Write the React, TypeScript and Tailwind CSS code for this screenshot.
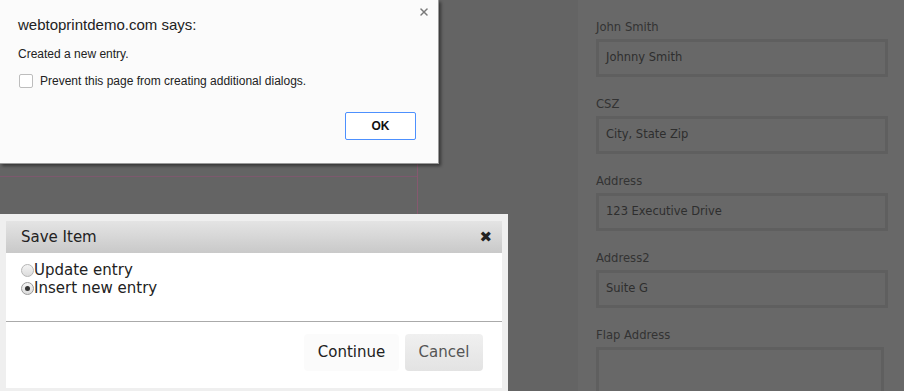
import { X } from "lucide-react";

const fields = [
  { label: "John Smith", value: "Johnny Smith" },
  { label: "CSZ", value: "City, State Zip" },
  { label: "Address", value: "123 Executive Drive" },
  { label: "Address2", value: "Suite G" },
];

const App = () => {
  return (
    <div className="relative w-[904px] h-[391px] overflow-hidden bg-[#646464] font-['DejaVu_Sans',sans-serif]">
      {/* page behind the overlay */}
      <div className="flex h-full">
        <div className="w-[578px] h-full flex items-start">
          <div className="w-[417px] h-[177px] border-b border-[#7d586e]" />
          <div className="w-px h-[260px] bg-[#86596f]" />
        </div>
        <div className="flex-1 h-full bg-[#686868] pl-[18px] pr-[16px] pt-[19px]">
          {fields.map((f) => (
            <div key={f.label} className="mb-[19px]">
              <p className="text-[11.6px] leading-[16px] text-[#333] mb-[4px]">{f.label}</p>
              <div className="h-[38px] border-[3px] border-[#5f5f5f] flex items-center pl-[7px] text-[11.5px] text-[#2e2e2e]">
                {f.value}
              </div>
            </div>
          ))}
          <p className="text-[11.6px] leading-[16px] text-[#333] mb-[4px]">Flap Address</p>
          <div className="h-[60px] mr-[4px] border-[3px] border-[#5f5f5f]" />
        </div>
      </div>

      {/* browser alert */}
      <div className="absolute left-0 top-0 w-[439px] h-[164px] bg-[#fbfbfb] border-r border-b border-[#9a9a9a] shadow-[2px_2px_3px_rgba(0,0,0,0.45)] font-['Liberation_Sans',sans-serif]">
        <X className="absolute right-[8px] top-[6px] w-[12px] h-[12px] text-[#7a7a7a]" strokeWidth={3} />
        <p className="pl-[18px] pt-[15px] text-[15px] leading-[20px] text-[#222]">webtoprintdemo.com says:</p>
        <p className="pl-[18px] pt-[11px] text-[12px] leading-[16px] text-[#222]">Created a new entry.</p>
        <div className="flex items-center pl-[19px] pt-[11px] gap-[7px]">
          <span className="w-[14px] h-[14px] rounded-[2px] border border-[#bdbdbd] bg-white" />
          <span className="text-[12px] leading-[16px] text-[#222]">Prevent this page from creating additional dialogs.</span>
        </div>
        <div className="flex justify-end pr-[22px] pt-[23px]">
          <button className="w-[71px] h-[28px] rounded-[2px] border border-[#4d90fe] bg-white text-[12px] font-bold text-[#111]">
            OK
          </button>
        </div>
      </div>

      {/* Save Item dialog */}
      <div className="absolute left-0 top-[214px] w-[508px] h-[177px] bg-[#efefef] pt-[7px] px-[6px] pb-[3px] flex flex-col">
        <div className="h-[32px] flex items-center justify-between pl-[15px] pr-[10px] bg-gradient-to-b from-[#e4e4e4] to-[#c9c9c9]">
          <span className="text-[15px] text-[#222]">Save Item</span>
          <span className="text-[15px] font-bold text-[#222] leading-none">✖</span>
        </div>
        <div className="flex-1 bg-white flex flex-col">
          <div className="h-[69px] pl-[15px] pt-[8px] border-b border-[#aaaaaa] text-[15px] leading-[18px] text-[#222]">
            <label className="flex items-center">
              <span className="w-[13px] h-[13px] rounded-full border border-[#b5b5b5] bg-gradient-to-b from-[#f4f4f4] to-[#dcdcdc]" />
              <span>Update entry</span>
            </label>
            <label className="flex items-center">
              <span className="w-[13px] h-[13px] rounded-full border border-[#9a9a9a] bg-gradient-to-b from-[#f4f4f4] to-[#dcdcdc] flex items-center justify-center">
                <span className="w-[5px] h-[5px] rounded-full bg-[#333]" />
              </span>
              <span>Insert new entry</span>
            </label>
          </div>
          <div className="flex justify-end gap-[6px] pr-[19px] pt-[12px]">
            <button className="w-[95px] h-[37px] rounded-[4px] bg-[#fbfbfb] text-[15px] text-[#222]">Continue</button>
            <button className="w-[78px] h-[37px] rounded-[4px] bg-gradient-to-b from-[#f0f0f0] to-[#e3e3e3] text-[15px] text-[#555]">Cancel</button>
          </div>
        </div>
      </div>
    </div>
  );
};

export default App;
